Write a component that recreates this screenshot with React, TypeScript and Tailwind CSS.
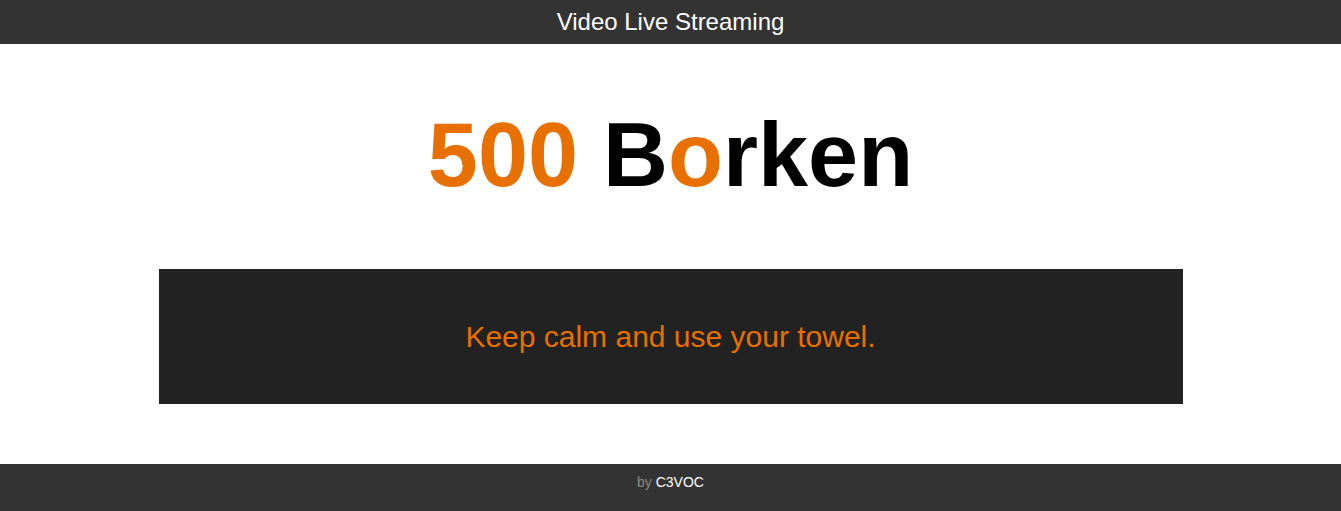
export default function App() {
  return (
    <div className="flex min-h-screen flex-col bg-white font-['Liberation_Sans',Arial,sans-serif]">
      {/* header */}
      <header className="h-[44px] bg-[#333333] text-center text-[24px] leading-[44px] text-white">
        Video Live Streaming
      </header>

      <main className="flex flex-col items-center">
        <h1 className="mt-[66px] text-[90px] font-bold leading-none text-black">
          <span className="text-[#e87000]">500</span> B<span className="text-[#e87000]">o</span>rken
        </h1>

        <div className="mt-[69px] flex h-[135px] w-[1024px] items-center justify-center bg-[#222222]">
          <p className="text-[30px] text-[#e87000]">Keep calm and use your towel.</p>
        </div>
      </main>

      {/* footer */}
      <footer className="mt-[60px] h-[47px] bg-[#333333] pt-2 text-center text-[14px] leading-5">
        <span className="text-[#8a8a8a]">by</span> <span className="text-white">C3VOC</span>
      </footer>
    </div>
  );
}
